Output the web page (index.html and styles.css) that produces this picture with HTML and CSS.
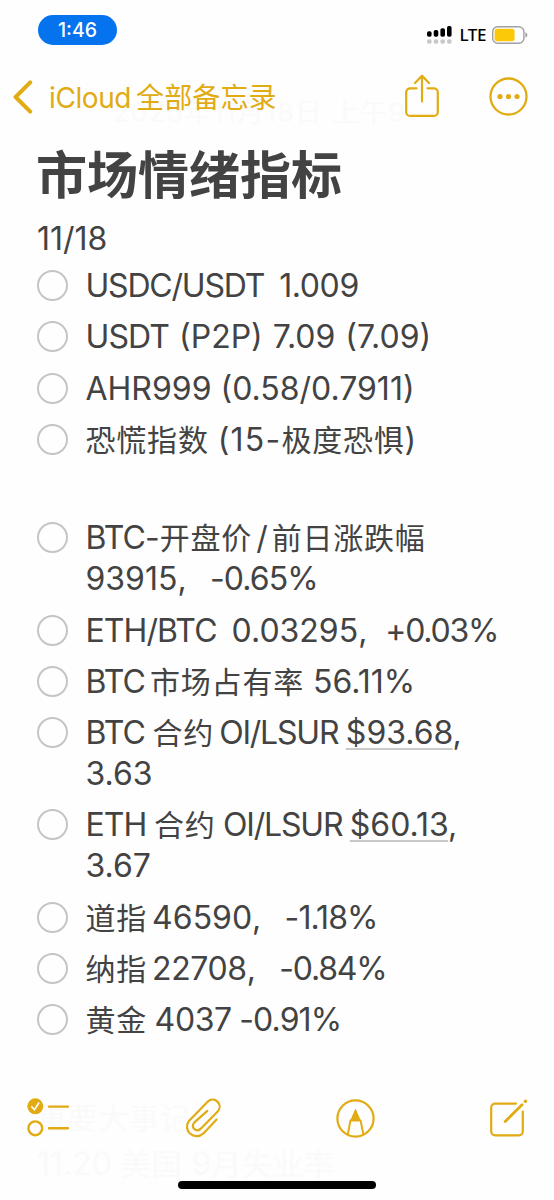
FILE: index.html
```html
<!DOCTYPE html>
<html lang="zh-CN">
<head>
    <meta charset="UTF-8">
    <meta name="viewport" content="width=device-width, initial-scale=1.0">
    <title>市场情绪指标</title>
    <link rel="stylesheet" href="styles.css">
</head>
<body>
    <div class="screen">
        <div class="status-bar">
            <div class="time">1:46</div>
            <div class="status-right">
                <svg class="signal" width="25" height="18" viewBox="0 0 25 18">
                    <g fill="#000">
                        <rect x="0" y="5.3" width="4.6" height="5.4" rx="1.8"/>
                        <rect x="6.7" y="4" width="4.6" height="6.7" rx="1.8"/>
                        <rect x="13.4" y="2.2" width="4.6" height="8.5" rx="1.8"/>
                        <rect x="20" y="0" width="4.6" height="10.7" rx="1.8"/>
                    </g>
                    <g fill="#c8c8c8">
                        <rect x="0" y="13.3" width="4.6" height="4.4" rx="1.8"/>
                        <rect x="6.7" y="13.3" width="4.6" height="4.4" rx="1.8"/>
                        <rect x="13.4" y="13.3" width="4.6" height="4.4" rx="1.8"/>
                        <rect x="20" y="13.3" width="4.6" height="4.4" rx="1.8"/>
                    </g>
                </svg>
                <span class="network">LTE</span>
                <svg class="battery" width="36" height="18" viewBox="0 0 36 18">
                    <rect x="0.7" y="0.7" width="31.2" height="16.6" rx="5" fill="none" stroke="#a0a0a3" stroke-width="1.4"/>
                    <rect x="2.6" y="2.8" width="20" height="12.4" rx="2.6" fill="#fbc908"/>
                    <path d="M33.4 6.3c2.6 1 2.6 4.4 0 5.4z" fill="#a0a0a3"/>
                </svg>
            </div>
        </div>

        <div class="nav-bar">
            <div class="back">
                <svg width="20" height="34" viewBox="0 0 20 34" fill="none" stroke="#e1ab12" stroke-width="4" stroke-linecap="round" stroke-linejoin="round">
                    <path d="M17.2 2.4L2.6 17l14.6 14.6"/>
                </svg>
                <span class="back-text">iCloud<span class="zh">全部备忘录</span></span>
            </div>
            <div class="nav-actions">
                <svg width="34" height="44" viewBox="0 0 34 44" fill="none" stroke="#e1ab12" stroke-width="2.2" stroke-linecap="round" stroke-linejoin="round">
                    <path d="M11.5 14.3H5.2a4 4 0 0 0-4 4v19.6a4 4 0 0 0 4 4h23.6a4 4 0 0 0 4-4V18.3a4 4 0 0 0-4-4h-6.3"/>
                    <path d="M17 27.5V2M10 9l7-7.3L24 9"/>
                </svg>
                <svg width="39" height="39" viewBox="0 0 39 39">
                    <circle cx="19.5" cy="19.5" r="18" fill="none" stroke="#e1ab12" stroke-width="2.3"/>
                    <g fill="#e1ab12">
                        <circle cx="11" cy="19.5" r="2.6"/>
                        <circle cx="19.5" cy="19.5" r="2.6"/>
                        <circle cx="28" cy="19.5" r="2.6"/>
                    </g>
                </svg>
            </div>
            <div class="note-date">2025年11月18日 上午9</div>
        </div>

        <div class="note">
            <h1>市场情绪指标</h1>
            <p class="date">11/18</p>

            <ul class="checklist">
                <li><i class="check"></i><div class="close"><span class="tighter">USDC/USDT</span>&nbsp; <span class="snug">1.009</span></div></li>
                <li><i class="check"></i><div class="loose"><span class="tight">USDT</span> (P2P) 7.09 (7.09)</div></li>
                <li><i class="check"></i><div>AHR999 (0.58/0.7911)</div></li>
                <li><i class="check"></i><div><span class="zh">恐慌指数</span> <span class="wide">(15-</span><span class="zh">极度恐惧</span>)</div></li>
            </ul>

            <ul class="checklist second">
                <li><i class="check"></i><div><span class="tight">BTC</span>-<span class="zh">开盘价</span><span class="slash">/</span><span class="zh">前日涨跌幅</span><br>93915<span class="comma">,</span><span class="tight">-0.65%</span></div></li>
                <li><i class="check"></i><div class="close"><span class="tight">ETH/BTC</span>&nbsp; 0.03295<span class="comma plus">,</span><span class="tighter">+0.03%</span></div></li>
                <li><i class="check"></i><div><span class="tight">BTC</span><span class="zh after">市场占有率</span> 56.11%</div></li>
                <li><i class="check"></i><div class="close"><span class="tight">BTC</span> <span class="zh">合约</span><span class="after tighter">OI/LSUR</span> <span class="link">$93.68</span>,<br>3.63</div></li>
                <li><i class="check"></i><div class="close"><span class="tight">ETH</span> <span class="zh">合约</span> <span class="tighter">OI/LSUR</span> <span class="link">$60.13</span>,<br>3.67</div></li>
                <li><i class="check"></i><div><span class="zh">道指</span><span class="after">46590</span><span class="comma">,</span><span class="tight">-1.18%</span></div></li>
                <li><i class="check"></i><div><span class="zh">纳指</span><span class="after snug">22708</span><span class="comma">,</span><span class="tighter">-0.84%</span></div></li>
                <li><i class="check"></i><div class="close"><span class="zh">黄金</span> <span class="snug">4037</span> <span class="tight">-0.91%</span></div></li>
            </ul>

            <div class="more">
                <p><span class="zh">重要大事记</span></p>
                <p>11.20 <span class="zh">美国</span> 9<span class="zh">月失业率</span></p>
            </div>
        </div>

        <div class="toolbar">
            <svg width="43" height="40" viewBox="0 0 43 40" fill="none" stroke="#e1ab12" stroke-width="2.4" stroke-linecap="round" stroke-linejoin="round">
                <circle cx="8.3" cy="8.3" r="8" fill="#e1ab12" stroke="none"/>
                <path d="M4.8 8.8l2.6 3 4.4-6.8" stroke="#fff" stroke-width="1.6"/>
                <circle cx="8.3" cy="30.3" r="6.9"/>
                <path d="M22 8.6h19M22 30.3h19"/>
            </svg>
            <svg width="36" height="40" viewBox="0 0 36 40" fill="none" stroke="#e1ab12" stroke-width="2.2" stroke-linecap="round" stroke-linejoin="round">
                <path d="M31.6 21.6L18.4 35.4C9.5 43.5-2.8 32.5 3.9 22.9L22.4 3.9C29.4-2.5 38.7 6.4 32.7 13.6L15.5 31C10.8 34.5 5.5 29.3 9.2 24.6L22.3 12.9"/>
            </svg>
            <svg width="39" height="39" viewBox="0 0 39 39" fill="none" stroke="#e1ab12" stroke-width="2.2" stroke-linejoin="round">
                <circle cx="19.5" cy="19.5" r="18.1"/>
                <path d="M11.8 35.6l2.6-14h10.200l2.800 14" stroke-width="2"/>
                <path d="M19.5 9.500l-5.500 12.500h11z" fill="#e1ab12" stroke="none"/>
            </svg>
            <svg width="38" height="38" viewBox="0 0 38 38" fill="none" stroke="#e1ab12" stroke-width="2.2" stroke-linecap="round" stroke-linejoin="round">
                <path d="M26 4.6H5.2a4 4 0 0 0-4 4v23.7a4 4 0 0 0 4 4h23.6a4 4 0 0 0 4-4V12.5"/>
                <path d="M15.2 22.5L32 5.7" stroke-width="2.8"/>
                <path d="M35.3 2.4l.3-.3" stroke-width="3.2"/>
            </svg>
        </div>
        <div class="home-indicator"></div>
    </div>
</body>
</html>
```

FILE: styles.css
```css
* {
    margin: 0;
    padding: 0;
    box-sizing: border-box;
}

body {
    font-family: Inter, 'Noto Sans CJK SC', sans-serif;
    background: #fefefe;
    color: #434343;
}

svg {
    display: block;
    flex-shrink: 0;
}

.screen {
    width: 554px;
    height: 1200px;
    position: relative;
    overflow: hidden;
}

/* Status bar */
.status-bar {
    height: 60px;
    padding: 15px 26px 0 38px;
    display: flex;
    justify-content: space-between;
    align-items: flex-start;
}

.time {
    width: 79px;
    height: 30px;
    border-radius: 15px;
    background: #0572ee;
    color: #fff;
    font-size: 19.5px;
    font-weight: 500;
    line-height: 31px;
    text-align: center;
}

.status-right {
    display: flex;
    align-items: center;
    padding-top: 11px;
    height: 29px;
}

.signal {
    margin-right: 7px;
}

.network {
    font-family: 'Noto Sans', sans-serif;
    font-size: 17px;
    font-weight: 500;
    line-height: 18px;
    letter-spacing: -0.4px;
    color: #000;
    margin-right: 6px;
}

/* Navigation */
.nav-bar {
    height: 76px;
    padding: 0 26px 0 13px;
    display: flex;
    justify-content: space-between;
    align-items: flex-start;
    color: #e1ab12;
    position: relative;
}

.back {
    display: flex;
    align-items: center;
    gap: 16px;
    padding-top: 19px;
}

.back-text {
    font-size: 28px;
    line-height: 34px;
    letter-spacing: -0.4px;
    padding-top: 2px;
    white-space: nowrap;
}

.back-text .zh {
    font-size: 28px;
    letter-spacing: 0.1px;
    margin-left: 5px;
}

.nav-actions {
    display: flex;
    align-items: center;
    gap: 50px;
    padding-top: 14px;
}

.note-date {
    position: absolute;
    left: 113px;
    top: 36px;
    font-size: 27px;
    line-height: 34px;
    letter-spacing: 1.2px;
    color: #fafafa;
    white-space: nowrap;
    z-index: -1;
}

/* Note */
.note {
    padding-left: 37px;
    font-size: 32px;
    line-height: 41px;
    white-space: nowrap;
}

h1 {
    font-size: 51px;
    font-weight: 700;
    line-height: 80px;
    margin-left: -1px;
}

.date {
    margin-top: 2px;
}

.checklist {
    list-style: none;
    display: flex;
    flex-direction: column;
    gap: 10.3px;
    margin-top: 6px;
}

.checklist.second {
    margin-top: 57.4px;
}

.checklist li {
    display: flex;
    gap: 17.5px;
}

.check {
    width: 31px;
    height: 31px;
    margin-top: 5px;
    border: 2px solid #c5c5c7;
    border-radius: 50%;
    flex-shrink: 0;
}

.zh {
    font-size: 30px;
    line-height: 1;
    letter-spacing: 0.8px;
}

/* Spacing tweaks for the latin runs */
.tight {
    letter-spacing: -0.9px;
}

.tighter {
    letter-spacing: -1.2px;
}

.snug {
    letter-spacing: -0.4px;
}

.wide {
    letter-spacing: 1.2px;
}

.close {
    word-spacing: -1.5px;
}

.loose {
    word-spacing: 1px;
}

.slash {
    margin: 0 4px;
}

.comma {
    display: inline-block;
    width: 32.5px;
}

.comma.plus {
    width: 27px;
}

.after {
    margin-left: 5px;
}

.link {
    text-decoration: underline #c9c9c9 2px;
    text-decoration-skip-ink: none;
    text-underline-offset: 4px;
}

.more {
    margin-top: 57px;
    color: #fafafa;
}

.more p {
    margin-bottom: 5px;
}

/* Bottom toolbar */
.toolbar {
    position: absolute;
    left: 0;
    right: 0;
    top: 1098px;
    padding: 0 26px 0 27px;
    display: flex;
    justify-content: space-between;
    align-items: center;
}

.home-indicator {
    position: absolute;
    left: 178px;
    top: 1181px;
    width: 198px;
    height: 8px;
    border-radius: 4px;
    background: #000;
}
```
